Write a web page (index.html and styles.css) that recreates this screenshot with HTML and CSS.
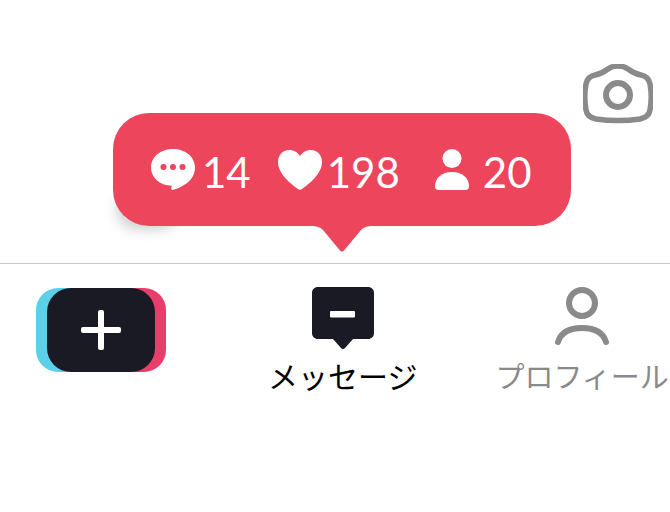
FILE: index.html
```html
<!DOCTYPE html>
<html lang="ja">

<head>
    <meta charset="UTF-8">
    <meta name="viewport" content="width=device-width, initial-scale=1.0">
    <title>TikTok</title>
    <link rel="stylesheet" href="styles.css">
</head>

<body>

    <div class="content">
        <svg class="camera" width="70" height="60" viewBox="0 0 70 60" fill="none" stroke="#8a8a8a" stroke-width="5.500">
            <path d="M12 11 C18 10 21 8 25 5 C30 1 40 1 45 5 C49 8 52 10 58 11 C63 12 66 15 67 20 C68.500 28 68.500 38 67 46 C66 52 62 54 57 55 C43 57 27 57 13 55 C8 54 4 52 3 46 C1.500 38 1.500 28 3 20 C4 15 7 12 12 11 Z" />
            <circle cx="35" cy="31" r="12" stroke-width="6" />
        </svg>
    </div>

    <!-- notification popup over the tab bar -->
    <div class="popup">
        <div class="popup-shadow"></div>
        <div class="popup-body">
            <div class="stat stat-comments">
                <svg width="44" height="41" viewBox="0 0 44 41">
                    <path fill="#fff" d="M22 0 C34.500 0 44 8 44 18.500 C44 26 40 32 33 36 C29 38.500 25 40.500 21.500 41 C20.500 41 20 40 20.300 38.500 L20.800 36.800 C8.500 36.300 0 28.500 0 18.500 C0 8 9.500 0 22 0 Z" />
                    <circle cx="12.500" cy="18" r="3" fill="#ed455c" />
                    <circle cx="22" cy="18" r="3" fill="#ed455c" />
                    <circle cx="31.500" cy="18" r="3" fill="#ed455c" />
                </svg>
                <span>14</span>
            </div>
            <div class="stat stat-likes">
                <svg width="44" height="40" viewBox="0 0 44 40">
                    <path fill="#fff" d="M22 6 C25 1.500 29 0 33 0 C39.500 0 44 5 44 12 C44 24 31 34 24 39 C22.700 40 21.300 40 20 39 C13 34 0 24 0 12 C0 5 4.500 0 11 0 C15 0 19 1.500 22 6 Z" />
                </svg>
                <span>198</span>
            </div>
            <div class="stat stat-followers">
                <svg width="34" height="41" viewBox="0 0 34 41">
                    <circle cx="17" cy="9.500" r="9.500" fill="#fff" />
                    <path fill="#fff" d="M17 23 C27 23 34 29 34 37 C34 39.500 33 41 30 41 L4 41 C1 41 0 39.500 0 37 C0 29 7 23 17 23 Z" />
                </svg>
                <span>20</span>
            </div>
        </div>
        <svg class="popup-arrow" width="62" height="26" viewBox="0 0 62 26">
            <path fill="#ed455c" d="M0 0 L62 0 C56 0 53 1 50 4 L33 24.500 C32 25.700 30 25.700 29 24.500 L12 4 C9 1 6 0 0 0 Z" />
        </svg>
    </div>

    <nav class="tabbar">
        <div class="tab">
            <div class="add-btn">
                <div class="add-btn-inner">
                    <svg width="40" height="40" viewBox="0 0 40 40">
                        <rect x="17" y="0" width="6" height="40" rx="2" fill="#fff" />
                        <rect x="0" y="17" width="40" height="6" rx="2" fill="#fff" />
                    </svg>
                </div>
            </div>
        </div>
        <div class="tab tab-messages">
            <svg class="tab-icon" width="62" height="63" viewBox="0 0 62 63">
                <path fill="#191a24" d="M6 0 L56 0 C59.500 0 62 2.500 62 6 L62 46 C62 49.500 59.500 52 56 52 L41 52 L33 61 C31.800 62.500 30.200 62.500 29 61 L21 52 L6 52 C2.500 52 0 49.500 0 46 L0 6 C0 2.500 2.500 0 6 0 Z" />
                <rect x="18" y="24" width="25" height="6.500" rx="1" fill="#fff" />
            </svg>
            <span class="tab-label">メッセージ</span>
        </div>
        <div class="tab tab-profile">
            <svg class="tab-icon" width="62" height="63" viewBox="0 0 62 63" fill="none" stroke="#8a8a8a" stroke-width="6">
                <circle cx="31" cy="16" r="13" />
                <path stroke-linecap="round" d="M7 55 C10 45 19 41 31 41 C43 41 52 45 55 55" />
            </svg>
            <span class="tab-label">プロフィール</span>
        </div>
    </nav>

</body>

</html>
```

FILE: styles.css
```css
html,
body {
    margin: 0;
    padding: 0;
    height: 512px;
    overflow: hidden;
    background-color: #fff;
}

body {
    font-family: "Noto Sans CJK JP", "Liberation Sans", sans-serif;
    position: relative;
}

.content {
    height: 263px;
    box-sizing: border-box;
    padding: 64px 17px 0 0;
    display: flex;
    justify-content: flex-end;
    align-items: flex-start;
}

.camera {
    display: block;
}

/* popup */
.popup {
    position: absolute;
    left: 113px;
    top: 113px;
    width: 458px;
}

.popup-shadow {
    position: absolute;
    left: 6px;
    top: 70px;
    width: 62px;
    height: 40px;
    border-radius: 20px;
    box-shadow: -2px 6px 14px rgba(0, 0, 0, 0.2);
}

.popup-body {
    position: relative;
    height: 113px;
    box-sizing: border-box;
    padding-left: 38px;
    display: flex;
    align-items: center;
    background-color: #ed455c;
    border-radius: 36px;
    color: #fff;
    font-family: Lato, "Liberation Sans", sans-serif;
    font-size: 42px;
}

.stat {
    display: flex;
    align-items: center;
}

.stat svg {
    display: block;
}

.stat span {
    padding-top: 4px;
}

.stat-comments {
    gap: 7px;
    margin-right: 27px;
}

.stat-likes {
    gap: 5px;
    margin-right: 35px;
}

.stat-followers {
    gap: 14px;
}

.popup-arrow {
    display: block;
    margin: 0 auto;
}

/* tab bar */
.tabbar {
    border-top: 1px solid #c6c6c6;
    display: flex;
    padding: 23px 0 0 36px;
}

.tab {
    display: flex;
    flex-direction: column;
    align-items: center;
    color: #8a8a8a;
}

.tab-messages {
    margin-left: 102px;
    color: #000;
}

.tab-messages .tab-label {
    font-size: 30px;
}

.tab-profile {
    margin-left: 78px;
}

.tab-icon {
    display: block;
}

.tab-label {
    font-size: 29px;
    line-height: 40px;
    white-space: nowrap;
    margin-top: 5px;
}

.add-btn {
    width: 130px;
    height: 84px;
    margin-top: 1px;
    border-radius: 22px;
    background: linear-gradient(to right, #5ccfe9 50%, #e83e6c 50%);
}

.add-btn-inner {
    height: 100%;
    margin: 0 11px;
    border-radius: 24px;
    background-color: #191a24;
    display: flex;
    align-items: center;
    justify-content: center;
}
```
